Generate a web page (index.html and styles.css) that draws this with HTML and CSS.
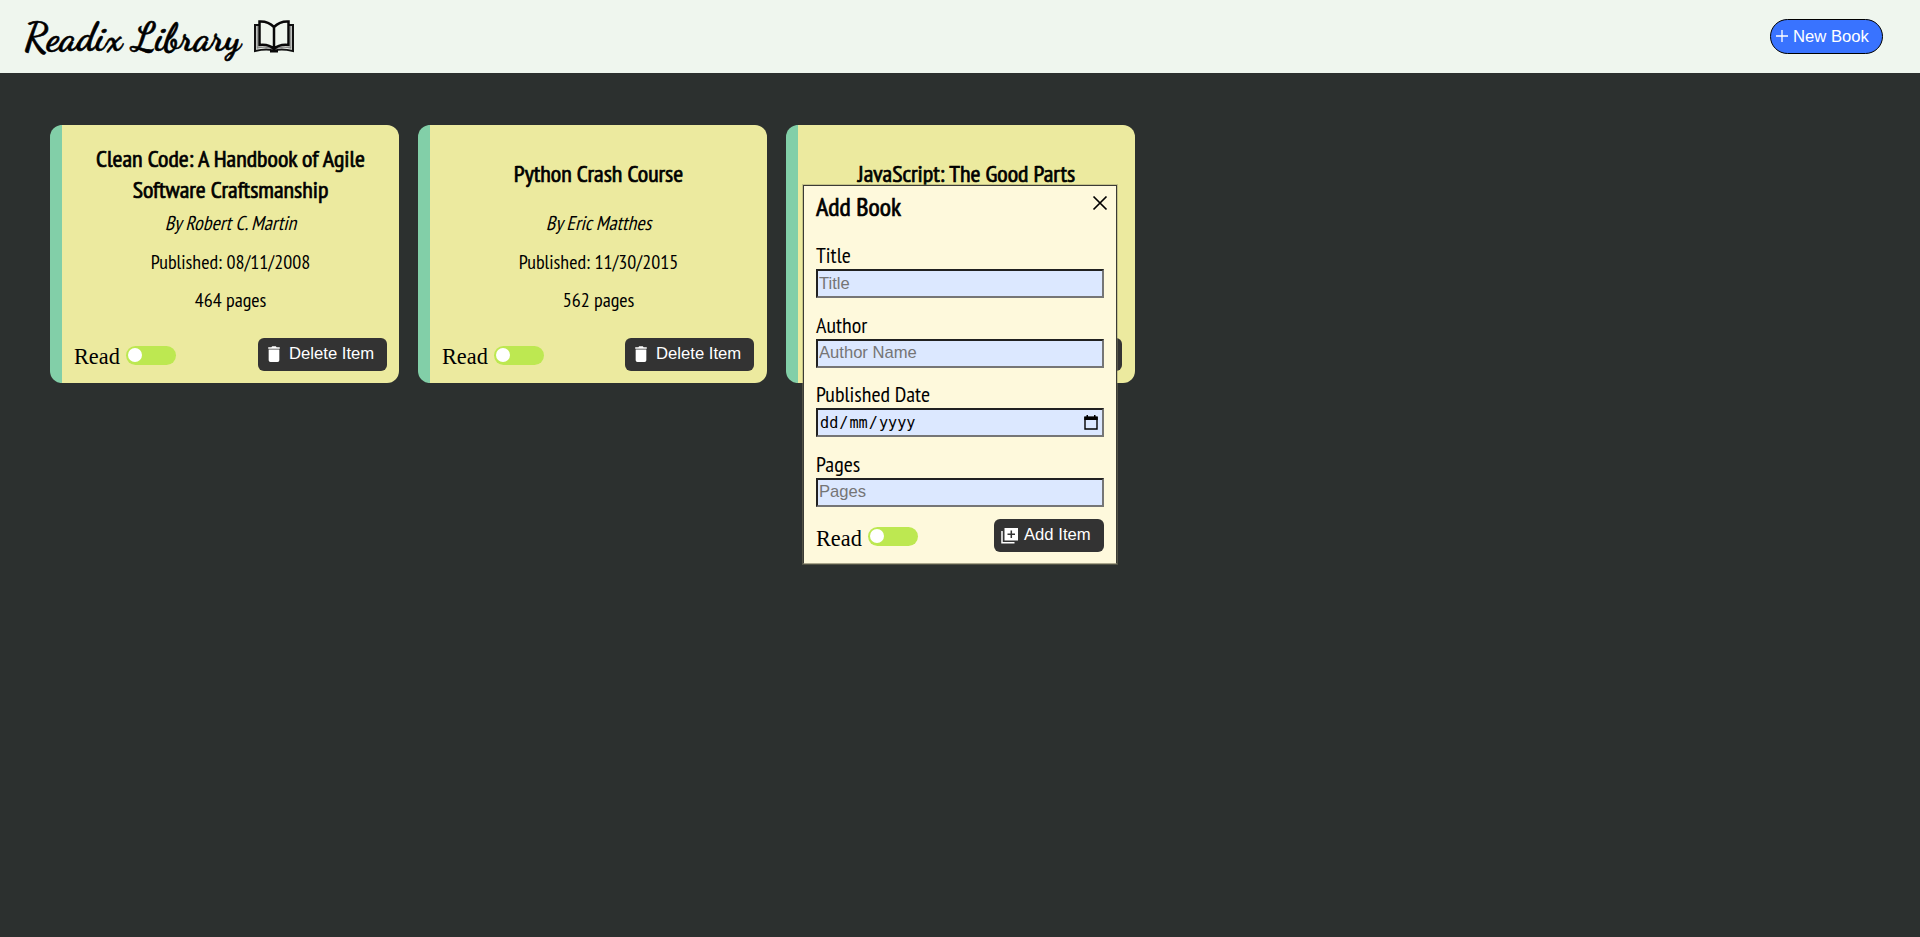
FILE: index.html
```html
<!DOCTYPE html>
<html lang="en">
<head>
<meta charset="utf-8">
<title>Readix Library</title>
<link rel="stylesheet" href="styles.css">
</head>
<body>
<header class="header">
  <div class="brand">
    <h1 class="brand-name">Readix Library</h1>
    <svg class="brand-icon" viewBox="0 0 40 33" fill="none" stroke="#080808" stroke-width="2">
      <path d="M5 5H1V31Q14 28 20 31Q26 28 39 31V5H35" stroke="#111"/>
      <path d="M3.2 6V28Q14 25.500 20 30Q26 25.500 36.800 28V6" stroke="#888" stroke-width="1.300"/>
      <path d="M20 7Q14 1 5.500 1.500V25Q15 24 20 29Q25 24 34.500 25V1.500Q26 1 20 7V29" stroke-width="2.500"/>
      <path d="M16 31H24" stroke-width="3"/>
    </svg>
  </div>
  <button class="new-book"><svg class="plus" viewBox="0 0 12 12"><path d="M6 0V12M0 6H12" stroke="#fff" stroke-width="1.300"/></svg>New Book</button>
</header>

<main class="books">
  <article class="card">
    <h2 class="card-title">Clean Code: A Handbook of Agile<br>Software Craftsmanship</h2>
    <p class="author">By Robert C. Martin</p>
    <p class="meta">Published: 08/11/2008</p>
    <p class="meta">464 pages</p>
    <div class="actions">
      <div class="read">Read <span class="switch"></span></div>
      <button class="btn"><svg class="trash" viewBox="0 0 14 18"><path fill="#fff" d="M1 16a2 2 0 0 0 2 2h8a2 2 0 0 0 2-2V4H1zM13.500 1.300H10L9 .3H5l-1 1H.5V3h13z"/></svg>Delete Item</button>
    </div>
  </article>
  <article class="card">
    <h2 class="card-title">Python Crash Course</h2>
    <p class="author">By Eric Matthes</p>
    <p class="meta">Published: 11/30/2015</p>
    <p class="meta">562 pages</p>
    <div class="actions">
      <div class="read">Read <span class="switch"></span></div>
      <button class="btn"><svg class="trash" viewBox="0 0 14 18"><path fill="#fff" d="M1 16a2 2 0 0 0 2 2h8a2 2 0 0 0 2-2V4H1zM13.500 1.300H10L9 .3H5l-1 1H.5V3h13z"/></svg>Delete Item</button>
    </div>
  </article>
  <article class="card">
    <h2 class="card-title">JavaScript: The Good Parts</h2>
    <div class="actions">
      <button class="btn blank"></button>
    </div>
  </article>
</main>

<form class="dialog">
  <div class="dialog-head">
    <h2 class="dialog-title">Add Book</h2>
    <svg class="close" viewBox="0 0 16 16"><path d="M1.500 1.500L14.500 14.500M14.500 1.500L1.500 14.500" stroke="#000" stroke-width="1.700"/></svg>
  </div>
  <label class="field"><span class="label">Title</span><input class="input" placeholder="Title"></label>
  <label class="field"><span class="label">Author</span><input class="input" placeholder="Author Name"></label>
  <div class="field"><span class="label">Published Date</span>
    <div class="input date"><span>dd<span class="slash">/</span>mm<span class="slash">/</span>yyyy</span>
      <svg class="calendar" viewBox="0 0 14 15"><path d="M1 2.500H13V14H1z" fill="none" stroke="#000" stroke-width="1.400"/><path d="M.3 1.500H13.700V5H.3zM2.500 0H4V2H2.500zM10 0H11.500V2H10z"/></svg>
    </div>
  </div>
  <label class="field"><span class="label">Pages</span><input class="input" placeholder="Pages"></label>
  <div class="dialog-actions">
    <div class="read">Read <span class="switch"></span></div>
    <button class="btn add" type="button"><svg class="add-icon" viewBox="0 0 17 17"><path fill="#fff" d="M3.500 1H17V13.500H3.500z"/><path d="M10.300 3.500V11M6.500 7.300H14" stroke="#333" stroke-width="1.500"/><path d="M1 4V15.700H13.500" fill="none" stroke="#fff" stroke-width="1.500"/></svg>Add Item</button>
  </div>
</form>
</body>
</html>
```
FILE: styles.css
```css
* { box-sizing: border-box; }
body { margin: 0; min-height: 937px; background: #2c302f; color: #000; font-family: "PT Sans Narrow", "Open Sans", sans-serif; }
h1, h2, p { margin: 0; }
.header { height: 73px; background: #eff6ee; display: flex; align-items: center; justify-content: space-between; padding: 0 37px 0 24px; }
.brand { display: flex; align-items: center; gap: 13px; }
.brand-name { font: 700 38.600px/46px "Dancing Script", cursive; white-space: nowrap; padding-top: 3px; -webkit-text-stroke: .6px #000; }
.brand-icon { width: 40px; height: 33px; }
.new-book { width: 113px; height: 35px; border: 1px solid #000; border-radius: 18px; background: #3973ff; color: #fff; font: 16.667px "Liberation Sans", sans-serif; padding: 0 0 0 5px; display: flex; align-items: center; gap: 5px; white-space: nowrap; }
.plus { width: 12px; height: 12px; flex: none; margin-top: -2px; }

.books { display: flex; gap: 19px; padding: 52px 50px; }
.card { width: 349px; height: 258px; background: #ecea9f; border-left: 12px solid #82cfa8; border-radius: 12px; padding: 18px 12px 12px 12px; display: flex; flex-direction: column; text-align: center; }
.card + .card { padding-right: 13px; padding-left: 13px; }
.card + .card .read { margin-left: -1px; }
.card-title { height: 62px; align-content: center; font-size: 24px; font-weight: 400; line-height: 31px; white-space: nowrap; -webkit-text-stroke: .7px #000; }
.card + .card .card-title { padding-bottom: 2px; }
.author, .meta { font-size: 20px; line-height: 26px; }
.author { font-style: italic; margin-top: 5px; }
.meta { margin-top: 12.500px; }
.actions { margin-top: auto; display: flex; justify-content: space-between; align-items: flex-end; }
.read { display: flex; align-items: center; gap: 6px; font: 22.300px/28px "Liberation Serif", serif; }
.switch { width: 50px; height: 19px; border-radius: 10px; background: #bde851; display: flex; align-items: center; padding-left: 2px; margin-top: -3px; }
.switch::before { content: ""; width: 14px; height: 14px; border-radius: 50%; background: #fff; margin-top: -1px; }
.btn { width: 129px; height: 33px; border: 0; border-radius: 6px; background: #333; color: #fff; font: 16.667px "Liberation Sans", sans-serif; padding: 0 0 2px 9px; display: flex; align-items: center; gap: 8px; white-space: nowrap; }
.trash { width: 14px; height: 16px; flex: none; }
.blank { margin-left: auto; }

.dialog { position: absolute; left: 803px; top: 185px; width: 314px; height: 379px; background: #fef9dc; border: 1px solid #3b3b35; border-bottom-color: #aaa68c; outline: 1px solid #8d8a6a66; padding: 5px 12px 0 12px; }
.dialog-head { display: flex; justify-content: space-between; margin-bottom: 18px; }
.dialog-title { font-size: 26px; font-weight: 400; line-height: 32px; -webkit-text-stroke: .7px #000; }
.close { width: 16px; height: 16px; margin: 4px -4px 0 0; }
.field { display: block; height: 69.500px; }
.label { display: block; font-size: 22px; line-height: 28px; height: 28px; }
.input { display: block; width: 288px; height: 29px; border: 2px inset #767676; border-radius: 0; background: #dce8ff; padding: 0 0 0 1px; font: 16.600px "Liberation Sans", sans-serif; }
.input::placeholder { color: #757575; }
.date { display: flex; align-items: center; justify-content: space-between; padding: 0 4px 0 2px; font: 15.200px "DejaVu Sans Mono", monospace; }
.slash { margin: 0 1px; }
.calendar { width: 14px; height: 15px; }
.dialog-actions { display: flex; justify-content: space-between; align-items: flex-start; }
.dialog-actions .read { margin-top: 6px; }
.dialog-actions .switch { margin-top: -5px; }
.add { width: 110px; padding: 0 0 1px 7px; gap: 6px; }
.add-icon { width: 17px; height: 17px; flex: none; }
```
